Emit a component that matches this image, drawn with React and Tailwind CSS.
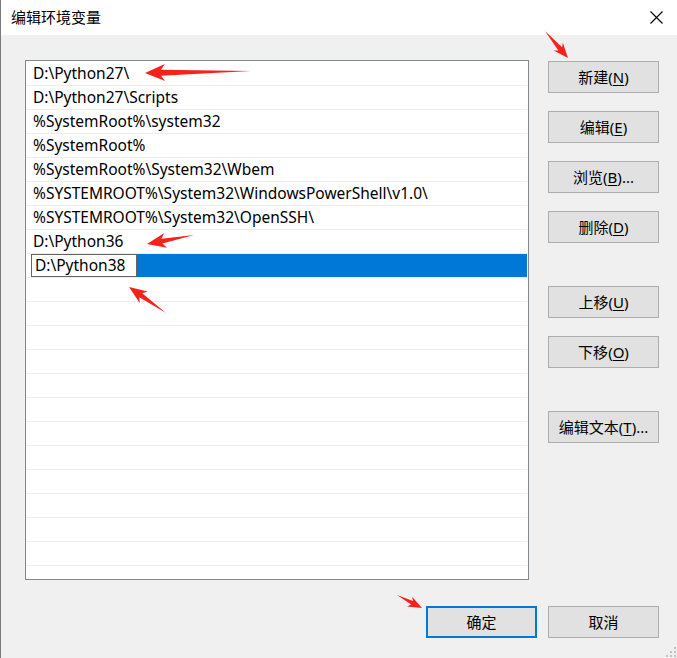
import React from 'react';

const paths = [
  'D:\\Python27\\',
  'D:\\Python27\\Scripts',
  '%SystemRoot%\\system32',
  '%SystemRoot%',
  '%SystemRoot%\\System32\\Wbem',
  '%SYSTEMROOT%\\System32\\WindowsPowerShell\\v1.0\\',
  '%SYSTEMROOT%\\System32\\OpenSSH\\',
  'D:\\Python36',
];

const font = { fontFamily: '"Noto Sans", "Noto Sans CJK SC", sans-serif' };

// tapered red arrow from tail to tip
const arrowPoints = (x1, y1, x2, y2, headLen, headW, shaftW) => {
  const dx = x2 - x1;
  const dy = y2 - y1;
  const len = Math.hypot(dx, dy);
  const ux = dx / len;
  const uy = dy / len;
  const nx = -uy;
  const ny = ux;
  const bx = x2 - ux * headLen;
  const by = y2 - uy * headLen;
  const bx2 = x2 - ux * headLen * 0.8;
  const by2 = y2 - uy * headLen * 0.8;
  const pts = [
    [x1, y1],
    [bx2 + (nx * shaftW) / 2, by2 + (ny * shaftW) / 2],
    [bx + (nx * headW) / 2, by + (ny * headW) / 2],
    [x2, y2],
    [bx - (nx * headW) / 2, by - (ny * headW) / 2],
    [bx2 - (nx * shaftW) / 2, by2 - (ny * shaftW) / 2],
  ];
  return pts.map((p) => p.join(',')).join(' ');
};

const arrows = [
  [250, 71, 144, 73, 20, 17, 6],
  [544, 31, 567, 58, 15, 12, 5],
  [193, 235, 146, 244, 19, 15, 5],
  [165, 313, 128, 287, 18, 14, 5],
  [396, 595, 421, 608, 14, 11, 4],
];

const Btn = ({ children, primary }) => (
  <div
    className={`w-[111px] h-[32px] flex items-center justify-center bg-[#e1e1e1] text-[15px] text-black ${
      primary ? 'border-2 border-[#0078d7]' : 'border border-[#adadad]'
    }`}
  >
    {children}
  </div>
);

const Key = ({ label, k, after = '' }) => (
  <span>
    {label}(<span className="underline underline-offset-2">{k}</span>){after}
  </span>
);

export default function App() {
  return (
    <div
      className="relative w-[677px] h-[658px] bg-[#f0f0f0] border-l border-[#7a7a7a] overflow-hidden"
      style={font}
    >
      <div className="h-[35px] bg-white flex items-center justify-between pl-[10px] pr-[14px]">
        <span className="text-[15px] text-black">编辑环境变量</span>
        <svg width="13" height="13" viewBox="0 0 13 13">
          <path d="M0.5 0.5 L12.5 12.5 M12.5 0.5 L0.5 12.5" stroke="#000" strokeWidth="1.1" />
        </svg>
      </div>

      <div className="flex pt-[25px] pl-[24px]">
        <div className="w-[504px] h-[520px] bg-white border border-[#828790] pt-[1px] overflow-hidden">
          {paths.map((p) => (
            <div
              key={p}
              className="h-[24px] mx-[1px] border-b border-[#ededed] flex items-center pl-[6px] text-[15.5px] text-black whitespace-nowrap"
            >
              {p}
            </div>
          ))}
          <div className="h-[24px] mx-[1px] border-b border-[#ededed] flex items-stretch">
            <div className="ml-[4px] w-[106px] bg-white border border-[#646464] flex items-center pl-[3px] text-[15.5px] text-black">
              D:\Python38
            </div>
            <div className="flex-1 bg-[#0078d7]" />
          </div>
          {Array.from({ length: 13 }).map((_, i) => (
            <div key={i} className="h-[24px] mx-[1px] border-b border-[#ededed]" />
          ))}
        </div>

        <div className="ml-[19px] pt-[1px] flex flex-col">
          <div className="flex flex-col gap-[18px]">
            <Btn><Key label="新建" k="N" /></Btn>
            <Btn><Key label="编辑" k="E" /></Btn>
            <Btn><Key label="浏览" k="B" after="..." /></Btn>
            <Btn><Key label="删除" k="D" /></Btn>
          </div>
          <div className="flex flex-col gap-[18px] mt-[43px]">
            <Btn><Key label="上移" k="U" /></Btn>
            <Btn><Key label="下移" k="O" /></Btn>
          </div>
          <div className="mt-[43px]">
            <Btn><Key label="编辑文本" k="T" after="..." /></Btn>
          </div>
        </div>
      </div>

      <div className="flex justify-end gap-[11px] pt-[26px] pr-[18px]">
        <Btn primary>确定</Btn>
        <Btn>取消</Btn>
      </div>

      <svg className="absolute right-0 bottom-0" width="12" height="12" viewBox="0 0 12 12">
        <rect x="9" y="1" width="2" height="2" fill="#c4c4c4" />
        <rect x="5" y="5" width="2" height="2" fill="#c4c4c4" />
        <rect x="9" y="5" width="2" height="2" fill="#c4c4c4" />
        <rect x="1" y="9" width="2" height="2" fill="#c4c4c4" />
        <rect x="5" y="9" width="2" height="2" fill="#c4c4c4" />
        <rect x="9" y="9" width="2" height="2" fill="#c4c4c4" />
      </svg>

      <svg className="absolute left-0 top-0 pointer-events-none" width="677" height="658">
        {arrows.map((a, i) => (
          <polygon key={i} points={arrowPoints(...a)} fill="#f5221b" />
        ))}
      </svg>
    </div>
  );
}
